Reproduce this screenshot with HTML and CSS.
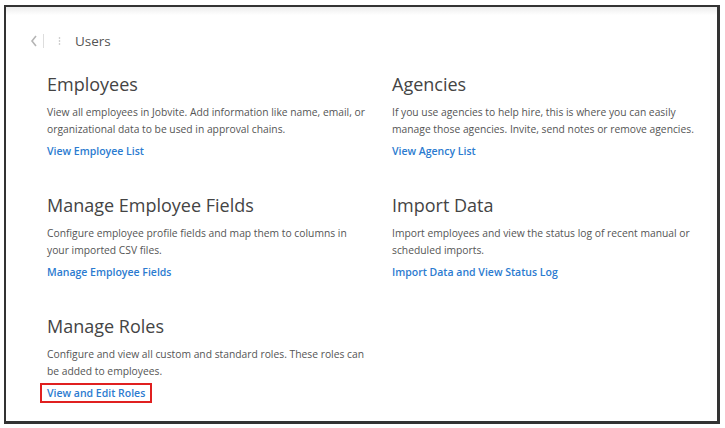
FILE: index.html
```html
<!DOCTYPE html>
<html lang="en">

<head>
    <meta charset="UTF-8">
    <meta name="viewport" content="width=device-width, initial-scale=1.0">
    <title>Users</title>
    <link rel="stylesheet" href="styles.css">
</head>

<body>
    <div class="frame">
        <div class="topbar">
            <span class="back">
                <svg width="8" height="12" viewBox="0 0 8 12"><path d="M6 1L2 6l4 5" fill="none" stroke="#b5b5b5" stroke-width="1.6"/></svg>
            </span>
            <span class="divider"></span>
            <span class="dots">
                <svg width="3" height="10" viewBox="0 0 3 10"><circle cx="1.5" cy="2" r="0.8" fill="#b5b5b5"/><circle cx="1.5" cy="5" r="0.8" fill="#b5b5b5"/><circle cx="1.5" cy="8" r="0.8" fill="#b5b5b5"/></svg>
            </span>
            <span class="page-title">Users</span>
        </div>

        <div class="sections">
            <div class="section">
                <h2>Employees</h2>
                <p>View all employees in Jobvite. Add information like name, email, or organizational data to be used in approval chains.</p>
                <a href="#">View Employee List</a>
            </div>
            <div class="section">
                <h2>Agencies</h2>
                <p>If you use agencies to help hire, this is where you can easily manage those agencies. Invite, send notes or remove agencies.</p>
                <a href="#">View Agency List</a>
            </div>
            <div class="section">
                <h2>Manage Employee Fields</h2>
                <p>Configure employee profile fields and map them to columns in your imported CSV files.</p>
                <a href="#">Manage Employee Fields</a>
            </div>
            <div class="section">
                <h2>Import Data</h2>
                <p>Import employees and view the status log of recent manual or scheduled imports.</p>
                <a href="#">Import Data and View Status Log</a>
            </div>
            <div class="section">
                <h2>Manage Roles</h2>
                <p>Configure and view all custom and standard roles. These roles can be added to employees.</p>
                <a href="#" class="marked">View and Edit Roles</a>
            </div>
        </div>
    </div>
</body>

</html>
```

FILE: styles.css
```css
body {
    margin: 0;
    background: #fff;
    font-family: "Open Sans", "Liberation Sans", sans-serif;
}

.frame {
    margin: 5px 0 0 4px;
    width: 711px;
    height: 414px;
    border: 2px solid #333;
    border-right-width: 3px;
    border-bottom-width: 3px;
    background: linear-gradient(#ececec, #fff 8px);
}

.topbar {
    display: flex;
    align-items: center;
    height: 20px;
    padding: 24px 0 0 24px;
}

.back {
    display: flex;
    width: 10px;
}

.divider {
    width: 1px;
    height: 14px;
    background: #ddd;
    margin: 0 14px 0 3px;
}

.dots {
    display: flex;
    margin-right: 14px;
}

.page-title {
    font-size: 13.5px;
    color: #555;
}

.sections {
    display: grid;
    grid-template-columns: 345px 320px;
    grid-auto-rows: 121px;
    padding: 20px 0 0 41px;
}

.section {
    display: flex;
    flex-direction: column;
    align-items: flex-start;
}

.section h2 {
    margin: 0 0 7px;
    font-size: 18px;
    font-weight: 400;
    color: #444;
    line-height: 26px;
}

.section p {
    margin: 0 0 5px;
    font-size: 10.3px;
    line-height: 17px;
    color: #555;
    max-width: 324px;
}

.section a {
    font-size: 10.5px;
    font-weight: 600;
    line-height: 16px;
    color: #2b7bd0;
    text-decoration: none;
}

.section a.marked {
    outline: 2px solid #e02020;
    padding: 0 5px;
    margin-left: -5px;
}
```
